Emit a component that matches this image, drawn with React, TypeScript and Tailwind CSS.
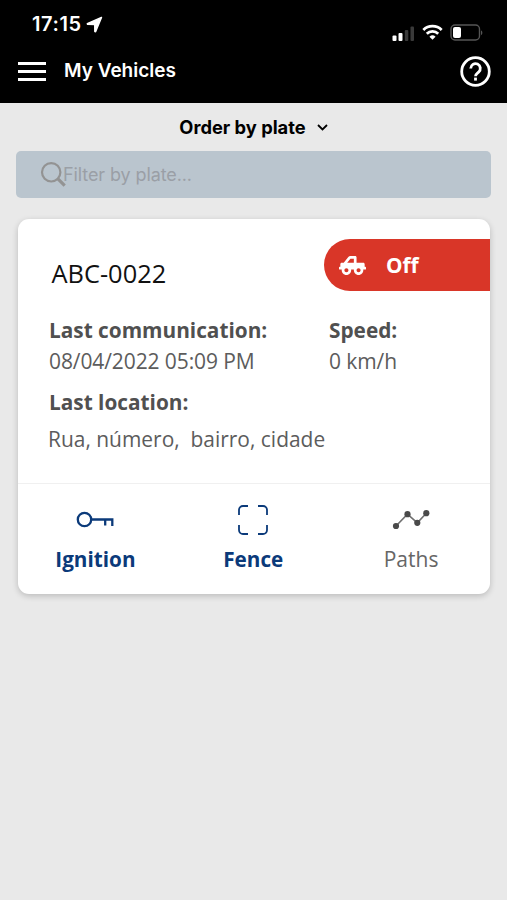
import { FaTruckPickup } from 'react-icons/fa';

function StatusBar() {
  return (
    <div className="flex h-[48px] items-start justify-between pl-[32px] pr-[24px] pt-[12px]">
      <div className="flex items-center gap-[4px]">
        <span className="text-[20px] leading-[24px] font-semibold tracking-[0.6px]">17:15</span>
        <svg width="17" height="17" viewBox="0 0 17 17" fill="currentColor" stroke="currentColor" strokeLinejoin="round">
          <path d="M15.500 1.400 1.300 7.600 1.500 8.400l7.200.1.100 7.100.8.100Z" strokeWidth="1.400" />
        </svg>
      </div>
      <div className="mt-[12px] flex items-center">
        <svg width="23" height="16" viewBox="0 0 23 16" className="mr-[7px]">
          <rect x="0.500" y="10.500" width="4" height="5.500" rx="1" fill="#fff" />
          <rect x="6.500" y="8" width="4" height="8" rx="1" fill="#fff" />
          <rect x="12.800" y="5" width="3.500" height="11" rx="1" fill="#3a3a3a" />
          <rect x="18.500" y="1.500" width="3.500" height="14.500" rx="1" fill="#3a3a3a" />
        </svg>
        <svg width="21" height="17" viewBox="0 0 22 17" fill="none" stroke="#fff" strokeWidth="2.900" className="mr-[7px]">
          <path d="M1.400 5.800a13.800 13.800 0 0 1 19.200 0" />
          <path d="M5 9.700a8.600 8.600 0 0 1 12 0" />
          <path d="m7.800 12.900 3.200 3.300 3.200-3.300a4.700 4.700 0 0 0-6.400 0Z" fill="#fff" stroke="none" />
        </svg>
        <svg width="33" height="17" viewBox="0 0 33 17">
          <rect x="1" y="1" width="28.500" height="15" rx="4" fill="none" stroke="#555" strokeWidth="1.400" />
          <rect x="3" y="3" width="8" height="11" rx="2" fill="#fff" />
          <path d="M31 6.500v4.500c1.800-.6 1.800-3.900 0-4.500Z" fill="#555" />
        </svg>
      </div>
    </div>
  );
}

function Header() {
  return (
    <header className="h-[103px] bg-black text-white">
      <StatusBar />
      <div className="flex h-[46px] items-center pl-[18px] pr-[16px]">
        <button type="button" aria-label="Menu" className="flex w-[28px] flex-col gap-[5px]">
          <span className="h-[3px] bg-white" />
          <span className="h-[3px] bg-white" />
          <span className="h-[3px] bg-white" />
        </button>
        <h1 className="ml-[18px] text-[19px] leading-[24px] font-semibold">My Vehicles</h1>
        <button type="button" aria-label="Help" className="ml-auto">
          <svg width="31" height="31" viewBox="0 0 31 31" fill="none" stroke="#fff" strokeWidth="2.800">
            <circle cx="15.500" cy="15.500" r="13.800" />
            <path d="M10.700 12.400a4.800 4.800 0 1 1 7.900 3.700c-1.700 1.400-3.100 2-3.100 4.200" />
            <path d="M15.500 21.600v3" />
          </svg>
        </button>
      </div>
    </header>
  );
}

function SearchField() {
  return (
    <label className="mx-[16px] flex h-[47px] items-center rounded-[5px] bg-[#bac5ce] pl-[24px] text-[#9a9fa6]">
      <svg width="27" height="27" viewBox="0 0 27 27" fill="none" stroke="#939393" className="-mr-[4px] shrink-0">
        <circle cx="11.200" cy="11.300" r="9.200" strokeWidth="2.200" />
        <path d="m17.700 17.700 7 7" strokeWidth="3.200" />
      </svg>
      <span className="mt-px text-[18px] leading-[24px] tracking-[-0.1px]">Filter by plate...</span>
    </label>
  );
}

function KeyIcon() {
  return (
    <svg width="38" height="18" viewBox="0 0 38 18" fill="none" stroke="currentColor" strokeWidth="2.300">
      <circle cx="8.500" cy="8.500" r="6.700" />
      <path d="M15.500 8.500h20.800V15M29.200 8.500v6" />
    </svg>
  );
}

function FenceIcon() {
  return (
    <svg width="30" height="30" viewBox="0 0 30 30" fill="none" stroke="currentColor" strokeWidth="1.800">
      <path d="M1 10V5a4 4 0 0 1 4-4h5M20 1h5a4 4 0 0 1 4 4v5M29 20v5a4 4 0 0 1-4 4h-5M10 29H5a4 4 0 0 1-4-4v-5" />
    </svg>
  );
}

function PathsIcon() {
  return (
    <svg width="38" height="22" viewBox="0 0 38 22" fill="#4a4a4a">
      <path d="M4 17 15.500 5.200 25.300 13.800 34.300 4.200" fill="none" stroke="#707070" strokeWidth="1.600" />
      <circle cx="4" cy="17" r="3.100" />
      <circle cx="15.500" cy="5.200" r="3.100" />
      <circle cx="25.300" cy="13.800" r="3.100" />
      <circle cx="34.300" cy="4.200" r="3.100" />
    </svg>
  );
}

const actions = [
  { label: 'Ignition', icon: <KeyIcon />, className: 'font-bold text-[20.700px] text-[#0b3a7a]' },
  { label: 'Fence', icon: <FenceIcon />, className: 'font-bold text-[20.700px] text-[#0b3a7a]' },
  { label: 'Paths', icon: <PathsIcon />, className: 'text-[21px] text-[#666]' },
];

function VehicleCard() {
  return (
    <article className="mr-[17px] ml-[17.500px] mt-[21px] h-[375px] overflow-hidden rounded-[11px] bg-white font-['Open_Sans',sans-serif] text-[#5c5c5c] shadow-[0_2px_6px_rgba(0,0,0,0.2)]">
      <div className="h-[265px] border-b border-[#f0f0f0] pt-[20px]">
        <div className="flex items-start justify-between pl-[34px]">
          <h2 className="mt-[17px] text-[25.400px] leading-[34px] text-[#111]">ABC-0022</h2>
          <div className="flex h-[52px] w-[166px] items-center rounded-l-full bg-[#d93628] pl-[15px] text-white">
            <FaTruckPickup size={27} className="-scale-x-100" />
            <span className="mt-[2px] ml-[20px] text-[20.800px] font-bold">Off</span>
          </div>
        </div>
        <div className="mt-[24px] flex pl-[31.500px] text-[20.800px] leading-[31px]">
          <div className="w-[280px]">
            <p className="font-bold text-[#505050]">Last communication:</p>
            <p className="text-[21px] tracking-[-0.1px]">08/04/2022 05:09 PM</p>
          </div>
          <div>
            <p className="font-bold text-[#505050]">Speed:</p>
            <p className="text-[21px] tracking-[-0.1px]">0 km/h</p>
          </div>
        </div>
        <div className="mt-[10px] pl-[31.500px] text-[20.800px] leading-[31px]">
          <p className="font-bold text-[#505050]">Last location:</p>
          <p className="mt-[6px] -ml-px text-[20.950px] whitespace-pre">Rua, número,  bairro, cidade</p>
        </div>
      </div>
      <div className="-ml-px grid grid-cols-3">
        {actions.map((action) => (
          <button
            key={action.label}
            type="button"
            className={`flex flex-col items-center pt-[21px] leading-[30px] ${action.className}`}
          >
            <span className="flex h-[30px] items-center">{action.icon}</span>
            <span className="mt-[9px]">{action.label}</span>
          </button>
        ))}
      </div>
    </article>
  );
}

export default function App() {
  return (
    <div className="h-[900px] w-[507px] overflow-hidden bg-[#e9e9e9] font-['Inter',sans-serif]">
      <Header />
      <main>
        <button type="button" className="flex h-[48px] w-full items-center justify-center gap-[11px] text-[18.300px] leading-[24px] font-bold text-black">
          Order by plate
          <svg width="11" height="7" viewBox="0 0 11 7" fill="none" stroke="currentColor" strokeWidth="1.800">
            <path d="m1 1 4.500 4.500L10 1" />
          </svg>
        </button>
        <SearchField />
        <VehicleCard />
      </main>
    </div>
  );
}
